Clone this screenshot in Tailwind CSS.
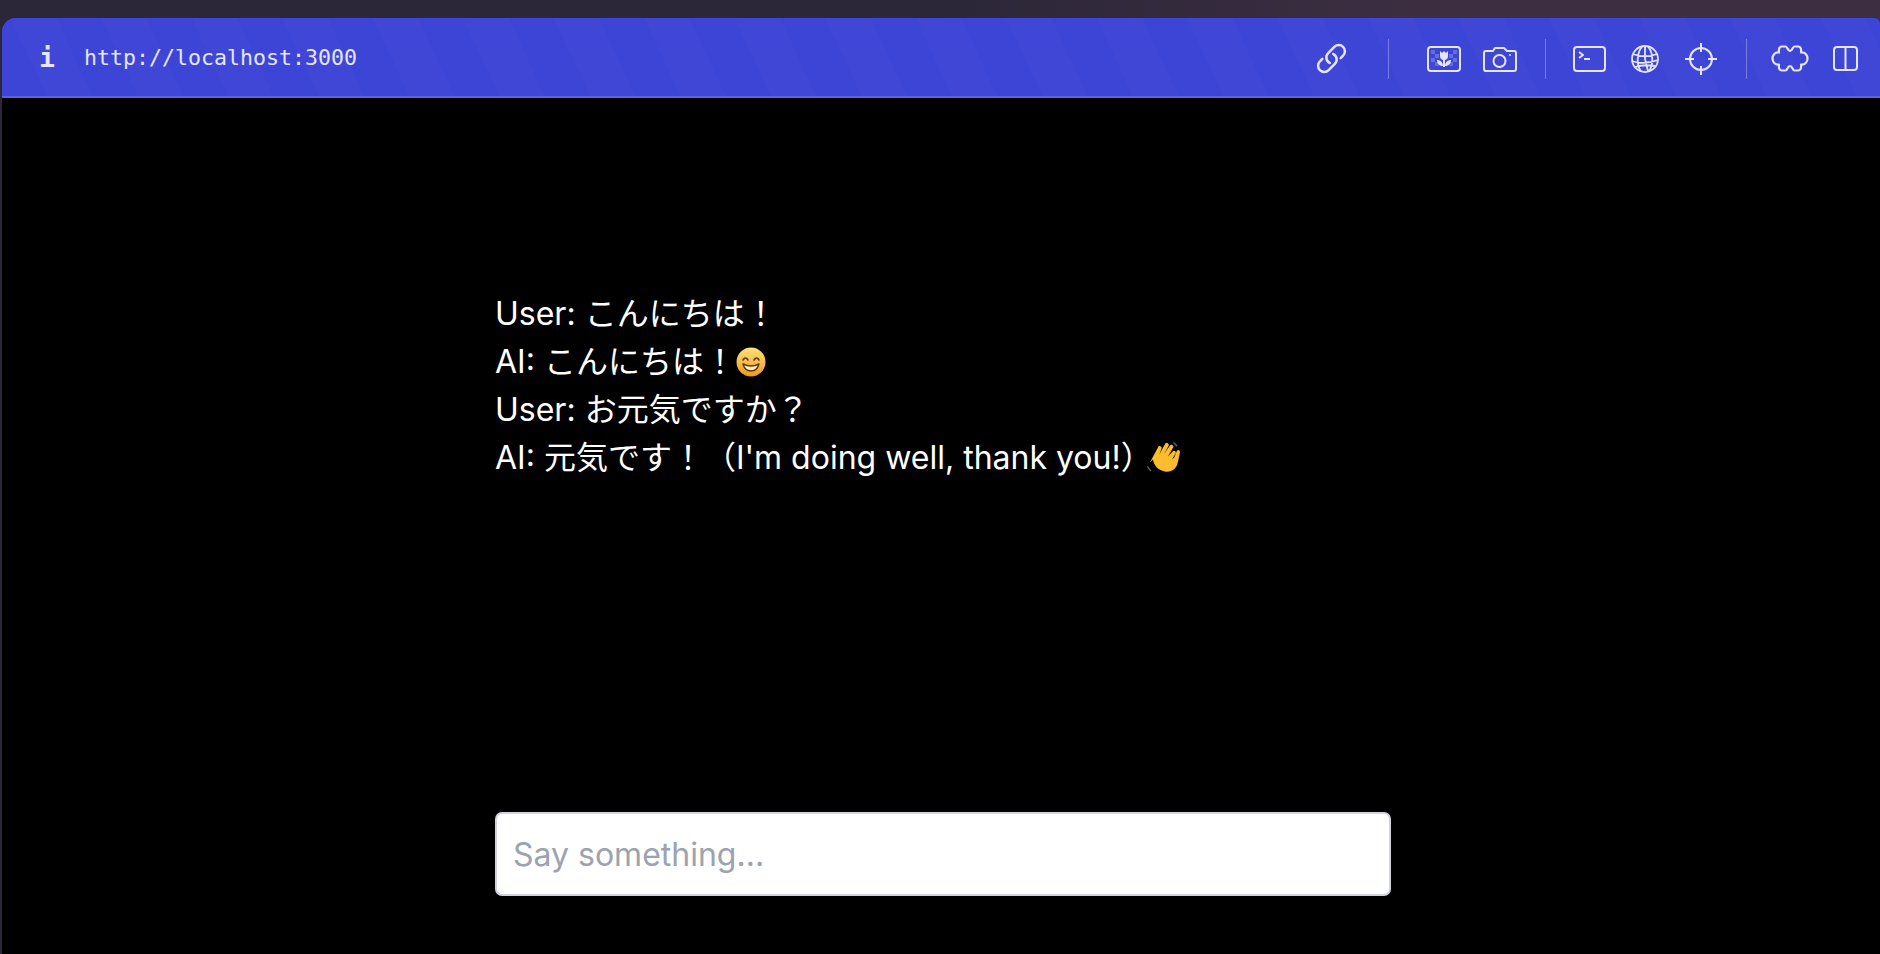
<!DOCTYPE html>
<html lang="ja">
<head>
  <meta charset="UTF-8" />
  <title>localhost</title>
  <script src="https://cdn.jsdelivr.net/npm/@tailwindcss/browser@4"></script>
</head>
<body class="h-screen overflow-hidden bg-[linear-gradient(90deg,#2b2738_50%,#3e2e42_78%)] font-['Inter','Noto_Sans_CJK_JP',sans-serif]">
  <div class="flex flex-col h-[936px] mt-[18px] ml-[2px] rounded-tl-[14px] rounded-tr-[6px] overflow-hidden bg-black">

    <!-- toolbar -->
    <div class="flex items-center h-[80px] pt-[3px] border-b-2 border-[#5a61e0] text-[#e4e6fb] bg-[#3e46d6] bg-[repeating-linear-gradient(65deg,#3d45d6_0px,#3d45d6_41px,#4047d7_41px,#4047d7_82px)]">
      <span class="w-[86px] pl-[4px] text-center font-bold text-[26px] font-['DejaVu_Sans_Mono',monospace]">i</span>
      <span class="-ml-[4px] text-[21.6px] font-['DejaVu_Sans_Mono',monospace]">http://localhost:3000</span>

      <div class="ml-auto flex items-center">
        <svg class="w-[33px] h-[33px] mr-[40px]" viewBox="0 0 24 24" fill="none" stroke="currentColor" stroke-width="1.800" stroke-linecap="round" stroke-linejoin="round"><path d="M13.190 8.688a4.500 4.500 0 0 1 1.242 7.244l-4.500 4.500a4.500 4.500 0 0 1-6.364-6.364l1.757-1.757m13.350-.622 1.757-1.757a4.500 4.500 0 0 0-6.364-6.364l-4.500 4.500a4.500 4.500 0 0 0 1.242 7.244"/></svg>
        <div class="w-px h-[40px] bg-white/30 mr-[38px]"></div>

        <svg class="w-[34px] h-[26px] mr-[22px]" viewBox="0 0 34 26" fill="none" stroke="currentColor" stroke-width="2"><rect x="1" y="1" width="32" height="24" rx="3"/><path stroke="none" fill="currentColor" fill-opacity=".25" d="M4 4h4v4H4zM8 8h4v4H8zM4 12h4v4H4zM8 16h4v4H8zM26 4h4v4h-4zM22 8h4v4h-4zM26 12h4v4h-4zM22 16h4v4h-4z"/><path stroke="none" fill="currentColor" d="M13 5l2 2 2-2 2 2 2-2v5a4 4 0 0 1-8 0zM16 14h2v7h-2zM10 14c3 0 6 2 6 6-3 0-6-2-6-6zM24 14c-3 0-6 2-6 6 3 0 6-2 6-6z"/></svg>
        <svg class="w-[34px] h-[26px] mr-[28px]" viewBox="0 0 34 26" fill="none" stroke="currentColor" stroke-width="2" stroke-linejoin="round"><path d="M3 5h7l2-3h9l3 3h7a2 2 0 0 1 2 2v16a2 2 0 0 1-2 2H3a2 2 0 0 1-2-2V7a2 2 0 0 1 2-2z"/><circle cx="16.500" cy="15" r="6"/><circle cx="27" cy="9" r="1" fill="currentColor" stroke="none"/></svg>
        <div class="w-px h-[40px] bg-white/30 mr-[27px]"></div>

        <svg class="w-[33px] h-[26px] mr-[24px]" viewBox="0 0 33 26" fill="none" stroke="currentColor" stroke-width="2" stroke-linejoin="round"><rect x="1" y="1" width="31" height="24" rx="3"/><path d="M6 6l4 3-4 3M11 13h6"/></svg>
        <svg class="w-[30px] h-[30px] mr-[25px]" viewBox="0 0 30 30" fill="none" stroke="currentColor" stroke-width="1.800"><circle cx="15" cy="15" r="13"/><path d="M12 2.500C7 9 6 20 11 27.500M18 2.500c5 6 6 17 1 25M15 2v13l3 12M3 10c7 3 17 3 24 0M2 17c8 3 18 2 26-1M5 23c6-2 14-2 20-1"/></svg>
        <svg class="w-[32px] h-[32px] mr-[29px]" viewBox="0 0 32 32" fill="none" stroke="currentColor" stroke-width="2"><circle cx="16" cy="16" r="11"/><path d="M16 0v9M16 23v9M0 16h9M23 16h9"/></svg>
        <div class="w-px h-[40px] bg-white/30 mr-[24px]"></div>

        <svg class="w-[38px] h-[27px] mr-[24px]" viewBox="0 0 38 27" fill="none" stroke="currentColor" stroke-width="2.200" stroke-linejoin="round"><path d="M11 1.500H14.500C16.500 1.500 16.500 6 19 6C21.500 6 21.500 1.500 23.500 1.500H27C29.500 1.500 30.500 3.500 30 7.500C34 7 36.500 10 36.500 13.500C36.500 17 34 20 30 19.500C30.500 23.500 29.500 25.500 27 25.500H23.500C21.500 25.500 21.500 21 19 21C16.500 21 16.500 25.500 14.500 25.500H11C8.500 25.500 7.500 23.500 8 19.500C4 20 1.500 17 1.500 13.500C1.500 10 4 7 8 7.500C7.500 3.500 8.500 1.500 11 1.500Z"/></svg>
        <svg class="w-[25px] h-[25px] mr-[22px]" viewBox="0 0 25 25" fill="none" stroke="currentColor" stroke-width="2"><rect x="1" y="1" width="23" height="23" rx="3"/><path d="M12.500 1v23"/></svg>
      </div>
    </div>

    <!-- chat -->
    <main class="flex-1 w-[896px] ml-[493px] flex flex-col bg-black">
      <div class="mt-[192px] text-[32px] leading-[48px] text-white">
        <p>User: こんにちは！</p>
        <p class="flex items-center">AI: こんにちは！<svg class="w-[30px] h-[30px]" viewBox="0 0 30 30"><defs><linearGradient id="smile" x1="0" y1="0" x2="0" y2="1"><stop offset="0" stop-color="#fde27a"/><stop offset="1" stop-color="#ee9a1e"/></linearGradient></defs><circle cx="15" cy="15" r="14.500" fill="url(#smile)"/><path d="M7 13q2.500-4 5 0M18 13q2.500-4 5 0" fill="none" stroke="#5e3410" stroke-width="1.600" stroke-linecap="round"/><path d="M7 17q8 4 16 0q-2 7-8 7t-8-7z" fill="#fff3c4" stroke="#5e3410" stroke-width="1.400" stroke-linejoin="round"/></svg></p>
        <p>User: お元気ですか？</p>
        <p class="flex items-center">AI: 元気です！（I'm doing well, thank you!）<svg class="w-[38px] h-[38px] -ml-[8px]" viewBox="0 0 32 30"><path d="M4 19L11 6a1.500 1.500 0 0 1 3 1l-2 5 5-9a1.700 1.700 0 0 1 3 1.500l-4 7 5-7a1.600 1.600 0 0 1 2.800 1.500l-4.500 8 4-4.500a1.500 1.500 0 0 1 2.400 1.800l-3 5 2-2 2-5c1-2 3-1 2.800 1l-1.800 8c-1 6-6 9-11 8-6-1-9-5-10-10z" fill="#fbbc2e"/><path d="M2 22l3 4M24 2l3 3" stroke="#5a5a66" stroke-width="1.200" fill="none"/></svg></p>
      </div>

      <input class="mt-auto mb-[58px] w-full h-[84px] px-[16px] text-[32px] bg-white text-black rounded-[7px] border-2 border-[#d1d5db] outline-none placeholder:text-[#9ca3af]" placeholder="Say something..." />
    </main>
  </div>
</body>
</html>
